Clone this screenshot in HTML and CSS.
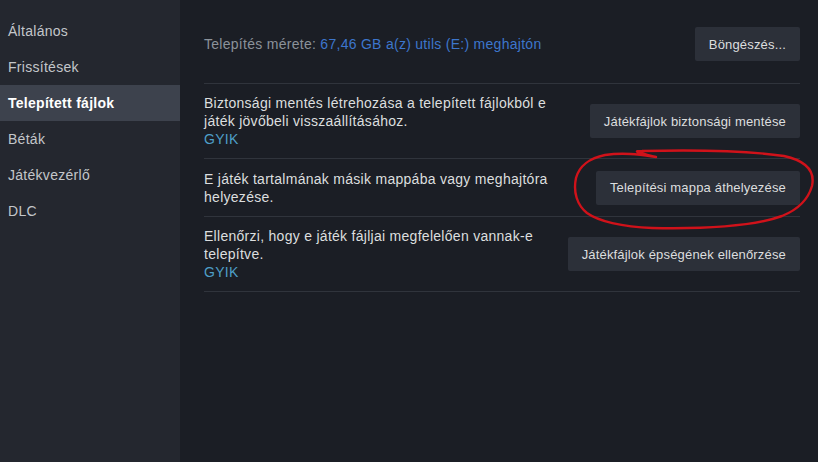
FILE: index.html
```html
<!DOCTYPE html>
<html lang="hu">
<head>
<meta charset="utf-8">
<link rel="stylesheet" href="styles.css">
</head>
<body>
<div class="app">
  <nav class="sidebar">
    <div class="nav-item">Általános</div>
    <div class="nav-item">Frissítések</div>
    <div class="nav-item active">Telepített fájlok</div>
    <div class="nav-item">Béták</div>
    <div class="nav-item">Játékvezérlő</div>
    <div class="nav-item">DLC</div>
  </nav>
  <main class="content">
    <div class="row row-size">
      <div class="desc"><span class="muted">Telepítés mérete:</span> <span class="size-link">67,46 GB a(z) utils (E:) meghajtón</span></div>
      <button class="btn">Böngészés...</button>
    </div>
    <div class="row">
      <div class="desc">Biztonsági mentés létrehozása a telepített fájlokból e<br>játék jövőbeli visszaállításához.<br><span class="faq">GYIK</span></div>
      <button class="btn">Játékfájlok biztonsági mentése</button>
    </div>
    <div class="row">
      <div class="desc">E játék tartalmának másik mappába vagy meghajtóra<br>helyezése.</div>
      <button class="btn">Telepítési mappa áthelyezése</button>
    </div>
    <div class="row">
      <div class="desc">Ellenőrzi, hogy e játék fájljai megfelelően vannak-e<br>telepítve.<br><span class="faq">GYIK</span></div>
      <button class="btn">Játékfájlok épségének ellenőrzése</button>
    </div>
  </main>
  <svg class="scribble" width="818" height="462" viewBox="0 0 818 462">
    <path d="M656 157 C641 153 630 151 642 151 C682 150 742 150 784 156 C807 161 815 172 812 186 C808 200 797 210 782 216 C752 227 702 229 652 228 C622 227 598 221 587 213 C577 205 573 192 576 178 C579 166 590 158 605 155 C625 152 642 155 656 157" fill="none" stroke="#d0121a" stroke-width="2.4" stroke-linecap="round"/>
  </svg>
</div>
</body>
</html>
```

FILE: styles.css
```css
* { box-sizing: border-box; }
html, body { margin: 0; padding: 0; }
body {
  width: 818px;
  height: 462px;
  overflow: hidden;
  background: #1b1e25;
  font-family: "Liberation Sans", Arial, sans-serif;
  font-size: 14px;
  letter-spacing: 0.28px;
  color: #dcdedf;
}
.app {
  position: relative;
  display: flex;
  width: 818px;
  height: 462px;
}
.sidebar {
  width: 180px;
  flex: none;
  background: #24272f;
  padding-top: 13px;
  display: flex;
  flex-direction: column;
}
.nav-item {
  height: 36px;
  line-height: 36px;
  padding-left: 8px;
  color: #c3c6ca;
  font-size: 14px;
}
.nav-item.active {
  background: #3d424d;
  color: #ffffff;
  font-weight: bold;
}
.content {
  flex: 1;
  padding: 0 18px 0 24px;
  display: flex;
  flex-direction: column;
}
.row {
  display: flex;
  align-items: center;
  justify-content: space-between;
  border-bottom: 1px solid #30343c;
  padding: 10px 0 10px;
  min-height: 58px;
}
.row-size {
  padding: 27px 0 22px;
  min-height: 84px;
}
.desc {
  line-height: 18px;
  color: #dcdedf;
}
.muted { color: #8b929a; }
.size-link { color: #3d76cc; }
.faq { color: #4e9fc8; }
.btn {
  flex: none;
  height: 34px;
  padding: 0 14px;
  border: none;
  border-radius: 2px;
  background: #2c3039;
  color: #dcdedf;
  font-family: "Liberation Sans", Arial, sans-serif;
  font-size: 13px;
  letter-spacing: 0.17px;
}
.scribble {
  position: absolute;
  left: 0;
  top: 0;
  pointer-events: none;
}
```
